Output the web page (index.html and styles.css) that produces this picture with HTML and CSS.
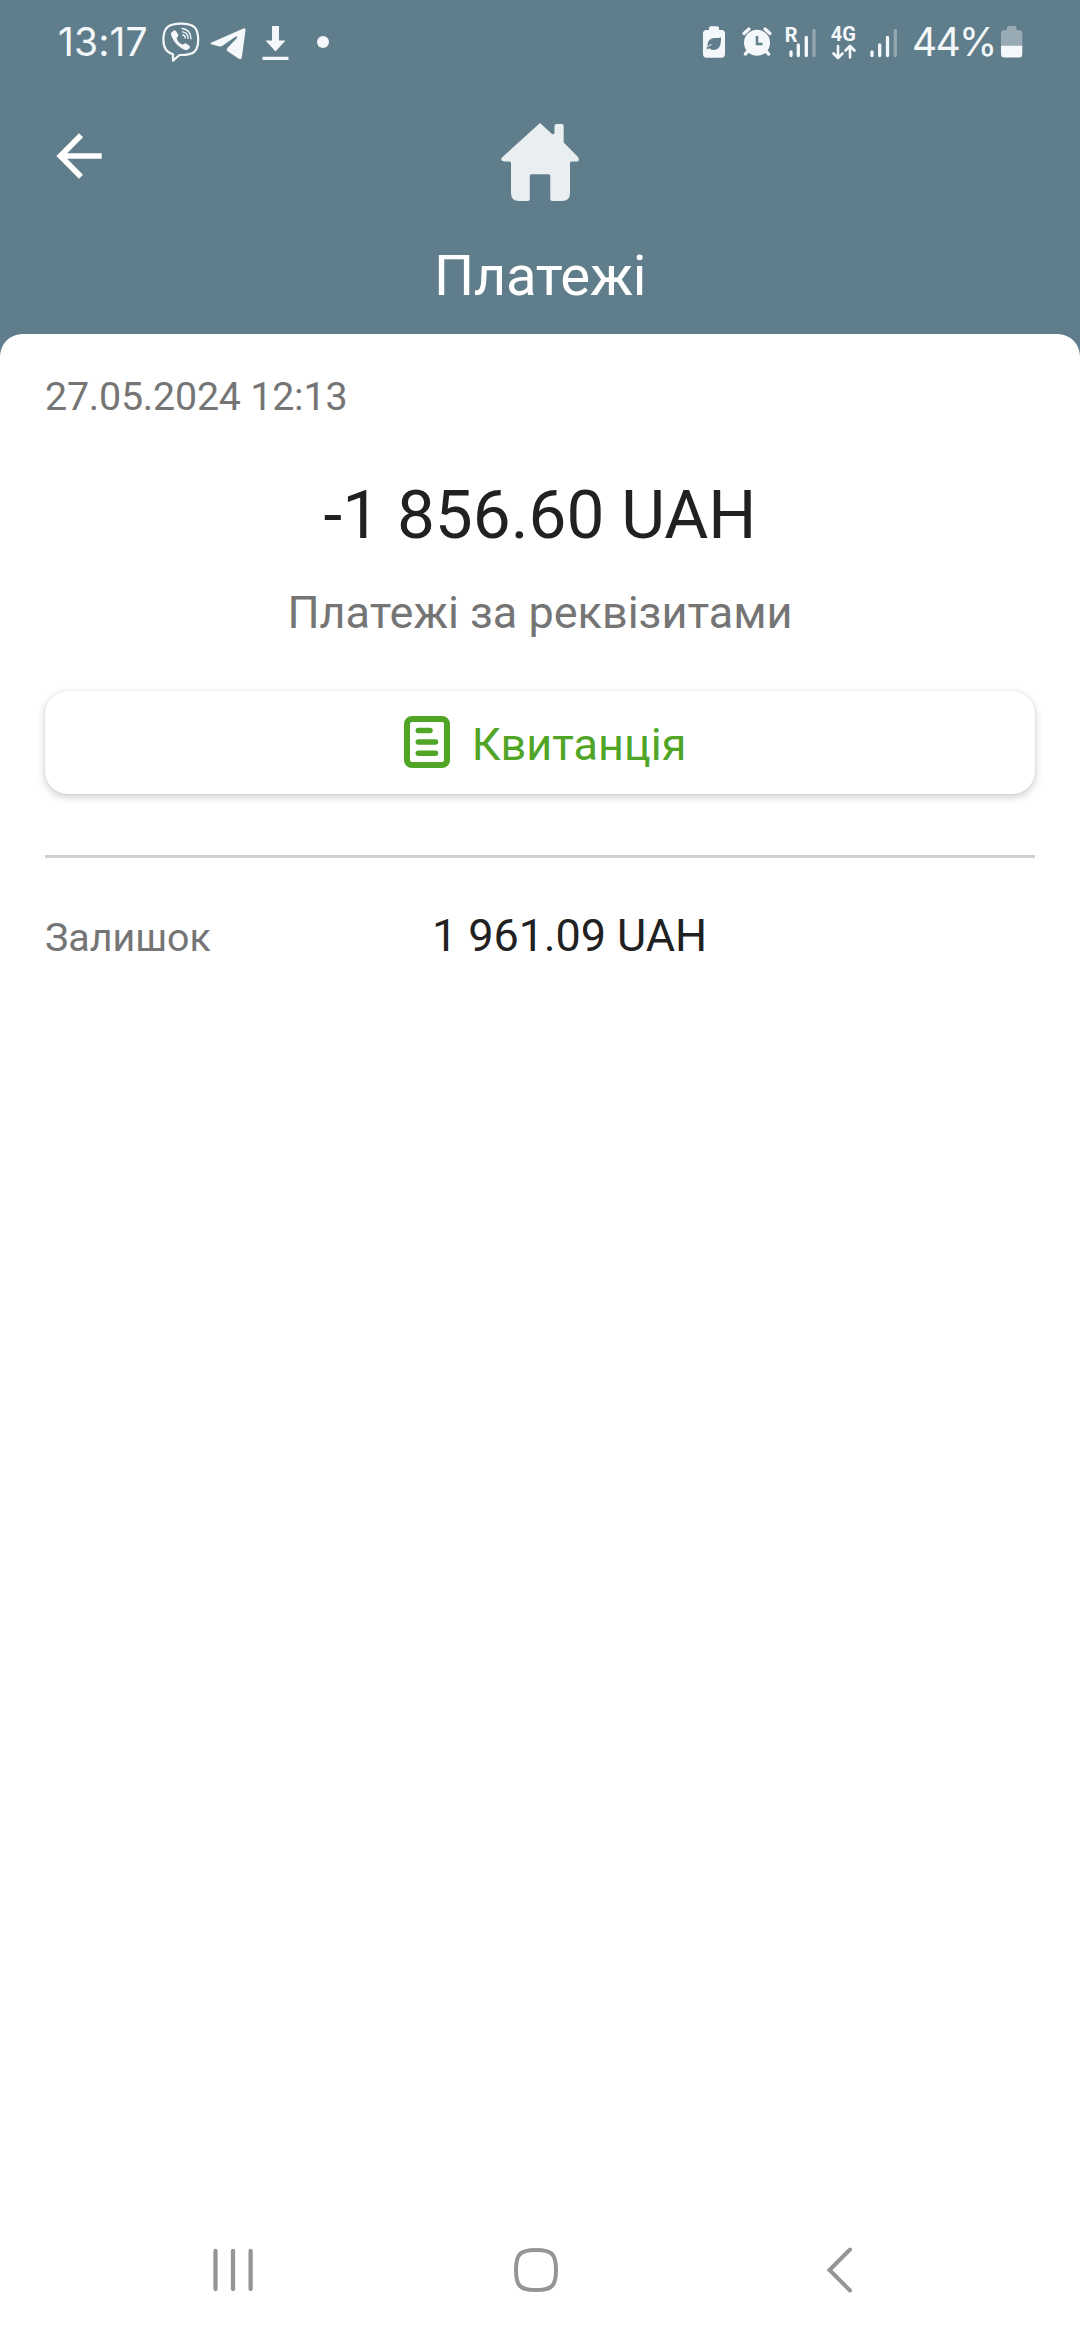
FILE: index.html
```html
<!DOCTYPE html>
<html lang="uk">
<head>
<meta charset="utf-8">
<title>Платежі</title>
<link rel="stylesheet" href="styles.css">
</head>
<body>
<div class="screen">
  <div class="status-bar">
    <div class="status-group status-left">
      <span class="clock">13:17</span>
      <svg class="icon-viber" width="38" height="40" viewBox="0 0 38 40" fill="none" stroke="#f5f8fa" stroke-linecap="round" stroke-linejoin="round">
        <path d="M19 1.6C31 1.6 36.2 5 36.2 17.500C36.200 29 32 33 19 33L17.500 33L11 38.700V32.200C4 30.500 1.400 26 1.400 17.500C1.400 5 7 1.600 19 1.600Z" stroke-width="2.200"/>
        <path fill="#f5f8fa" stroke="none" d="M9.600 10.200L12 8.400Q13 8 14 9.200L16.200 12.500Q16.800 13.800 15.600 15L14.600 16Q15.500 20.500 20.700 22.800L22 21.700Q23.200 20.900 24.500 21.700L27.300 23.700Q28.500 24.800 27.600 26L26 27.600Q24.500 28.700 21.500 27.200C15 23.700 11.500 19.300 9.200 13.200Q8.500 11.200 9.600 10.200Z"/>
        <path d="M20 6.500Q28.500 7.300 29 16.800M20.400 9.800Q26 10.300 26 16.400M20.800 13Q23.200 13.200 23.200 15.900" stroke-width="1.300"/>
      </svg>
      <svg class="icon-telegram" width="36" height="32" viewBox="0 0 36 32">
        <path fill="#f5f8fa" d="M1 14.800L33.400 .4Q35.800 -.2 35.500 2.400L31.800 29.500Q31.200 32 28.800 30.700L18 23.500Q15.800 21.700 17.600 19.700L27 10L27.300 8.400L25.500 8.800L12.800 17.500Q10.800 18.900 8.500 18.200L1.200 16.200Q-.6 15.600 1 14.800Z"/>
      </svg>
      <svg class="icon-download" width="27" height="34" viewBox="0 0 27 34" fill="#f5f8fa">
        <path d="M10 0H17V14.500H23.500L13.500 25.500L3.500 14.500H10ZM.5 30.700H26.500V34H.5Z"/>
      </svg>
      <span class="dot"></span>
    </div>
    <div class="status-group">
      <svg width="22" height="32" viewBox="0 0 22 32">
        <path fill="#f5f8fa" d="M6 4V2Q6 .3 8 .3H14Q16 .3 16 2V4H18.500Q22 4 22 7.500V28Q22 31.700 18.500 31.700H3.500Q0 31.700 0 28V7.500Q0 4 3.500 4Z"/>
        <path fill="#607d8b" d="M18 11.500Q18.500 24 10.500 24Q7.500 24 6.500 22.200L3.800 23.500V21.200Q7 20.500 10 17.500Q6.500 18.600 4.500 20.700Q4 12 12 12Q15 12.200 18 11.500Z"/>
      </svg>
      <svg class="icon-alarm" width="30" height="30" viewBox="0 0 30 30">
        <path d="M2 6.500L7 2M28 6.500L23 2" stroke="#f5f8fa" stroke-width="3.200" stroke-linecap="round"/>
        <path d="M6 24L3.500 27M24 24L26.500 27" stroke="#f5f8fa" stroke-width="3.500" stroke-linecap="round"/>
        <circle cx="15" cy="15.700" r="13" fill="#f5f8fa"/>
        <path d="M15 9V17H20.500" fill="none" stroke="#607d8b" stroke-width="2.500"/>
      </svg>
      <svg class="icon-signal-r" width="30" height="32" viewBox="0 0 30 32" stroke="#f5f8fa" stroke-width="3.300" stroke-linecap="round">
        <text class="net-label" x="-1.300" y="15">R</text>
        <path d="M5 25V28.500M12.300 18V28.500M20.300 10.500V28.500"/><path d="M28 3.500V28.500" opacity=".35"/>
      </svg>
      <svg class="icon-data" width="26" height="34" viewBox="0 0 26 34" fill="none" stroke="#f5f8fa" stroke-width="2.600" stroke-linecap="round" stroke-linejoin="round">
        <text class="net-label" x="-.3" y="15">4G</text>
        <path d="M7 20V32M2.500 27.500L7 32L11.500 27.500M19 31.500V20M14.500 24.500L19 20L23.500 24.500"/>
      </svg>
      <svg class="icon-signal" width="28" height="32" viewBox="0 0 28 32" stroke="#f5f8fa" stroke-width="3.300" stroke-linecap="round">
        <path d="M2 25V28.500M9.700 18V28.500M17.500 10.500V28.500"/><path d="M25.300 3.500V28.500" opacity=".35"/>
      </svg>
      <span class="percent">44%</span>
      <svg class="icon-battery" width="22" height="32" viewBox="0 0 22 32">
        <path fill="#98aab4" d="M6 4V1.500Q6 0 8 0H13.500Q15.500 0 15.500 1.500V4H18Q21.300 4 21.300 7.500V20H0V7.500Q0 4 3.500 4Z"/>
        <path fill="#f5f8fa" d="M0 19.700H21.300V28Q21.300 31.500 18 31.500H3.500Q0 31.500 0 28Z"/>
      </svg>
    </div>
  </div>

  <header class="header">
    <svg class="back" width="68" height="68" viewBox="0 0 24 24"><path fill="#fff" d="M20 11H7.830l5.590-5.590L12 4l-8 8 8 8 1.410-1.410L7.830 13H20v-2z"/></svg>
    <svg class="home" width="78" height="78" viewBox="0 0 78 78"><path fill="#e9eef1" d="M39 0L51 11Q53.500 12 53.500 9.500V3Q53.500 1 55.500 1H61Q62.700 1 62.700 3V19.500L77 34Q79.500 38.500 75 38.500H70.500Q69 38.500 69 40V70Q69 78 61 78H51Q49.300 78 49.300 76V53Q49.300 51.300 47.500 51.300H30.500Q28.800 51.300 28.800 53V76Q28.800 78 27 78H18Q10 78 10 70V40Q10 38.500 8.500 38.500H3Q-1.500 38 1 34.500Z"/></svg>
    <h1 class="title">Платежі</h1>
  </header>

  <main class="sheet">
    <div class="date">27.05.2024 12:13</div>
    <div class="amount">-1 856.60 UAH</div>
    <div class="purpose">Платежі за реквізитами</div>
    <button class="receipt">
      <svg width="46" height="52" viewBox="0 0 46 52" fill="none" stroke="#51a526"><rect x="3" y="3" width="40" height="46" rx="5" stroke-width="6"/><path d="M14.300 14.500H26M14.300 26H31.500M14.300 37.200H31.500" stroke-width="5.500" stroke-linecap="round"/></svg>
      <span>Квитанція</span>
    </button>
    <div class="row">
      <span class="row-label">Залишок</span>
      <span class="row-value">1 961.09 UAH</span>
    </div>
  </main>

  <nav class="nav">
    <svg width="48" height="48" viewBox="0 0 48 48" stroke="#959595" stroke-width="4.300" stroke-linecap="round"><path d="M6.500 5V43M24 5V43M41.600 5V43"/></svg>
    <svg width="48" height="48" viewBox="0 0 48 48" fill="none" stroke="#959595" stroke-width="4"><path d="M24 4C40 4 44 8 44 24S40 44 24 44S4 40 4 24S8 4 24 4Z"/></svg>
    <svg width="48" height="48" viewBox="0 0 48 48" fill="none" stroke="#959595" stroke-width="4" stroke-linecap="round"><path d="M35 3.500L14.500 24L35 44.500"/></svg>
  </nav>
</div>
</body>
</html>
```

FILE: styles.css
```css
* { box-sizing: border-box; }
body { margin: 0; font-family: Roboto, "Noto Sans", sans-serif; }
svg { display: block; flex: none; overflow: visible; }
.screen { width: 1080px; height: 2340px; background: #607d8b; display: flex; flex-direction: column; overflow: hidden; }

.status-bar { height: 84px; padding: 0 57px 0 58px; display: flex; justify-content: space-between; align-items: center; }
.status-group { display: flex; align-items: center; }
.clock, .percent { font-family: Inter, Roboto, sans-serif; font-size: 39px; line-height: 48px; color: #f5f8fa; white-space: nowrap; }
.clock { width: 93px; letter-spacing: .1px; }
.icon-viber { margin-left: 11px; }
.icon-telegram { margin: 3px 0 0 10px; }
.icon-download { margin: 2px 0 0 16px; }
.dot { width: 12px; height: 12px; border-radius: 50%; background: #f5f8fa; margin-left: 28px; }
.icon-alarm { margin-left: 17px; }
.icon-signal-r { margin: 1px 0 0 14px; }
.icon-data { margin: 2px 0 0 15px; }
.icon-signal { margin: 1px 0 0 13px; }
.percent { width: 88px; margin-left: 14px; letter-spacing: -1.7px; }
.icon-battery { margin-left: 1px; }
.net-label { font: 700 20px Roboto, sans-serif; fill: #f5f8fa; stroke: none; }

.header { height: 250px; display: grid; grid-template-columns: 1fr 78px 1fr; grid-template-rows: 156px 94px; align-items: start; }
.back { margin: 38px 0 0 45px; }
.home { margin-top: 39px; }
.title { grid-column: 1 / -1; margin: 4px 0 0; text-align: center; font-size: 56.25px; line-height: 64px; letter-spacing: -.3px; font-weight: 400; color: #fff; }

.sheet { flex: 1; background: #fff; border-radius: 22.5px 22.5px 0 0; padding: 40px 45px 0; }
.date { height: 46px; font-size: 39.375px; line-height: 46px; letter-spacing: -.2px; color: #757575; }
.amount { margin-top: 55px; text-align: center; font-size: 67.5px; line-height: 80px; color: #212121; }
.purpose { margin-top: 32px; text-align: center; font-size: 45px; line-height: 52px; color: #757575; }
.receipt { width: 100%; height: 103px; margin: 52px 0 61px; padding: 0 0 1px 10px; display: flex; justify-content: center; align-items: center; gap: 22px; border: 0; border-radius: 22.5px; background: #fff; box-shadow: 0 3px 8px rgba(0,0,0,.2), 0 0 2px rgba(0,0,0,.1); font: 45px/52px Roboto, sans-serif; color: #51a526; }
.receipt span { padding-top: 5px; }
.row { border-top: 3px solid #cfcfcf; padding-top: 52px; display: grid; grid-template-columns: 387px 1fr; align-items: baseline; }
.row-label { font-size: 39.375px; line-height: 46px; color: #757575; }
.row-value { font-size: 45px; line-height: 52px; letter-spacing: -.1px; color: #212121; }

.nav { height: 140px; padding: 0 217px 0 209px; background: #fff; display: flex; justify-content: space-between; align-items: center; }
```
